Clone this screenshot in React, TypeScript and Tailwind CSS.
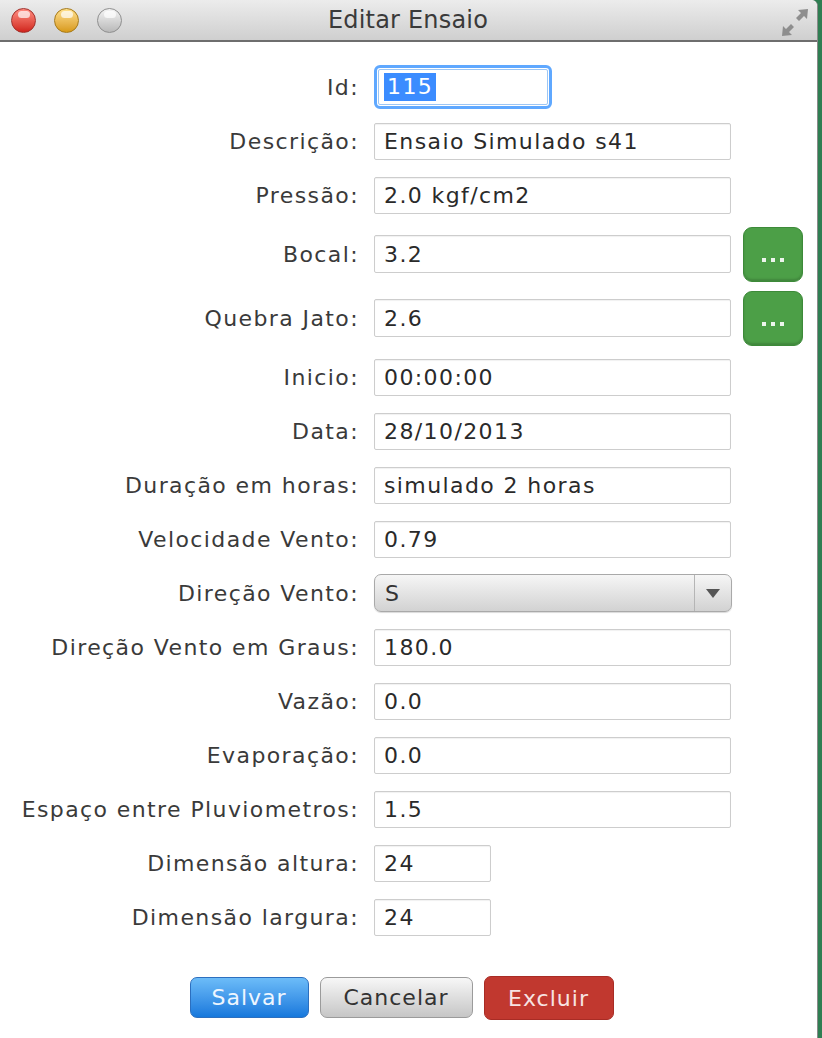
import React from 'react';

type Row = {
  label: string;
  value: string;
  h: string;
  kind?: 'focus' | 'select' | 'short' | 'browse';
};

const rows: Row[] = [
  { label: 'Id:', value: '115', h: 'h-[54px]', kind: 'focus' },
  { label: 'Descrição:', value: 'Ensaio Simulado s41', h: 'h-[54px]' },
  { label: 'Pressão:', value: '2.0 kgf/cm2', h: 'h-[54px]' },
  { label: 'Bocal:', value: '3.2', h: 'h-[64px]', kind: 'browse' },
  { label: 'Quebra Jato:', value: '2.6', h: 'h-[64px]', kind: 'browse' },
  { label: 'Inicio:', value: '00:00:00', h: 'h-[54px]' },
  { label: 'Data:', value: '28/10/2013', h: 'h-[54px]' },
  { label: 'Duração em horas:', value: 'simulado 2 horas', h: 'h-[54px]' },
  { label: 'Velocidade Vento:', value: '0.79', h: 'h-[54px]' },
  { label: 'Direção Vento:', value: 'S', h: 'h-[54px]', kind: 'select' },
  { label: 'Direção Vento em Graus:', value: '180.0', h: 'h-[54px]' },
  { label: 'Vazão:', value: '0.0', h: 'h-[54px]' },
  { label: 'Evaporação:', value: '0.0', h: 'h-[54px]' },
  { label: 'Espaço entre Pluviometros:', value: '1.5', h: 'h-[54px]' },
  { label: 'Dimensão altura:', value: '24', h: 'h-[54px]', kind: 'short' },
  { label: 'Dimensão largura:', value: '24', h: 'h-[54px]', kind: 'short' },
];

function Field({ row }: { row: Row }) {
  if (row.kind === 'focus') {
    return (
      <div className="w-[178px] h-[44px] rounded-[6px] border-[3px] border-[#5fa8ff] p-[1px] bg-white">
        <div className="h-full flex items-center pl-[5px] border border-[#9cc6f5] rounded-[2px]">
          <span className="bg-[#3b8cff] text-white px-[3px] leading-[28px]">{row.value}</span>
        </div>
      </div>
    );
  }
  if (row.kind === 'select') {
    return (
      <div className="w-[358px] h-[38px] rounded-[7px] border border-[#a9a9a9] bg-gradient-to-b from-[#f6f6f6] to-[#d2d2d2] flex items-center shadow-[0_1px_1px_rgba(0,0,0,0.15)]">
        <span className="flex-1 pl-[10px] text-[#333]">{row.value}</span>
        <div className="w-[37px] h-full border-l border-[#b5b5b5] flex items-center justify-center">
          <svg width="14" height="9" viewBox="0 0 14 9">
            <path d="M0 0 H14 L7 9 Z" fill="#555" />
          </svg>
        </div>
      </div>
    );
  }
  return (
    <div className="flex items-center gap-[12px]">
      <div
        className={`${row.kind === 'short' ? 'w-[117px]' : 'w-[357px]'} ${
          row.kind === 'browse' ? 'h-[38px]' : 'h-[37px]'
        } border border-[#cdcdcd] rounded-[2px] bg-white flex items-center pl-[9px] text-[#2a2a2a] shadow-[inset_0_1px_1px_rgba(0,0,0,0.06)]`}
      >
        {row.value}
      </div>
      {row.kind === 'browse' && (
        <div className="w-[60px] h-[55px] rounded-[9px] bg-[#4c9f47] border border-[#3d8a39] shadow-[inset_0_-2px_2px_rgba(0,0,0,0.15)] flex items-end justify-center gap-[5px] pb-[19px]">
          <span className="w-[4px] h-[4px] bg-white/90" />
          <span className="w-[4px] h-[4px] bg-white/90" />
          <span className="w-[4px] h-[4px] bg-white/90" />
        </div>
      )}
    </div>
  );
}

function TrafficLight({ color, ring }: { color: string; ring: string }) {
  return (
    <div className={`w-[25px] h-[25px] rounded-full border ${ring} ${color} relative overflow-hidden`}>
      <div className="absolute left-[6px] top-[2px] w-[12px] h-[7px] rounded-full bg-white/70" />
    </div>
  );
}

export default function App() {
  return (
    <div className="w-[822px] h-[1038px] bg-[#2f7e52] flex font-['DejaVu_Sans',sans-serif]">
      <div className="w-[818px] h-full bg-white border-r border-[#8a8a8a] rounded-tr-[6px] flex flex-col">
        <div className="h-[42px] shrink-0 bg-gradient-to-b from-[#ececec] to-[#cfcfcf] border-b-2 border-[#6e6e6e] flex items-center relative rounded-tr-[6px]">
          <div className="flex items-center gap-[18px] pl-[11px]">
            <TrafficLight color="bg-gradient-to-b from-[#ff8a80] to-[#d0201a]" ring="border-[#a1302a]" />
            <TrafficLight color="bg-gradient-to-b from-[#ffe08a] to-[#d89a10]" ring="border-[#a67a1a]" />
            <TrafficLight color="bg-gradient-to-b from-[#f4f4f4] to-[#b9b9b9]" ring="border-[#8f8f8f]" />
          </div>
          <div className="flex-1 text-center text-[24px] tracking-[0.2px] text-[#3a3a3a] pr-[123px]">Editar Ensaio</div>
          <svg className="absolute right-[8px] top-[8px]" width="28" height="29" viewBox="0 0 28 29">
            <path d="M27 1 L17 2 L20 5 L15 10 L18 13 L23 8 L26 11 Z" fill="#8e8e8e" />
            <path d="M1 28 L11 27 L8 24 L13 19 L10 16 L5 21 L2 18 Z" fill="#8e8e8e" />
          </svg>
        </div>

        <div className="pt-[18px] flex flex-col text-[22px] tracking-[1.4px]">
          {rows.map((row) => (
            <div key={row.label} className={`${row.h} flex items-center`}>
              <div className="w-[360px] shrink-0 text-right text-[#3a3a3a] pr-[1px]">{row.label}</div>
              <div className="pl-[14px]">
                <Field row={row} />
              </div>
            </div>
          ))}
        </div>

        <div className="flex justify-center gap-[11px] pt-[33px] text-[22px] tracking-[1px] pr-[14px]">
          <button className="w-[119px] h-[41px] rounded-[7px] bg-gradient-to-b from-[#6cbcf8] to-[#1578dc] border border-[#2c6fbf] text-[#eef6ff]">
            Salvar
          </button>
          <button className="w-[153px] h-[41px] rounded-[7px] bg-gradient-to-b from-[#f7f7f7] to-[#c6c6c6] border border-[#9b9b9b] text-[#333]">
            Cancelar
          </button>
          <button className="w-[130px] h-[44px] rounded-[7px] bg-[#c1382f] border border-[#a82c25] text-[#f7e3e2] mt-[-1px]">
            Excluir
          </button>
        </div>
      </div>
    </div>
  );
}
